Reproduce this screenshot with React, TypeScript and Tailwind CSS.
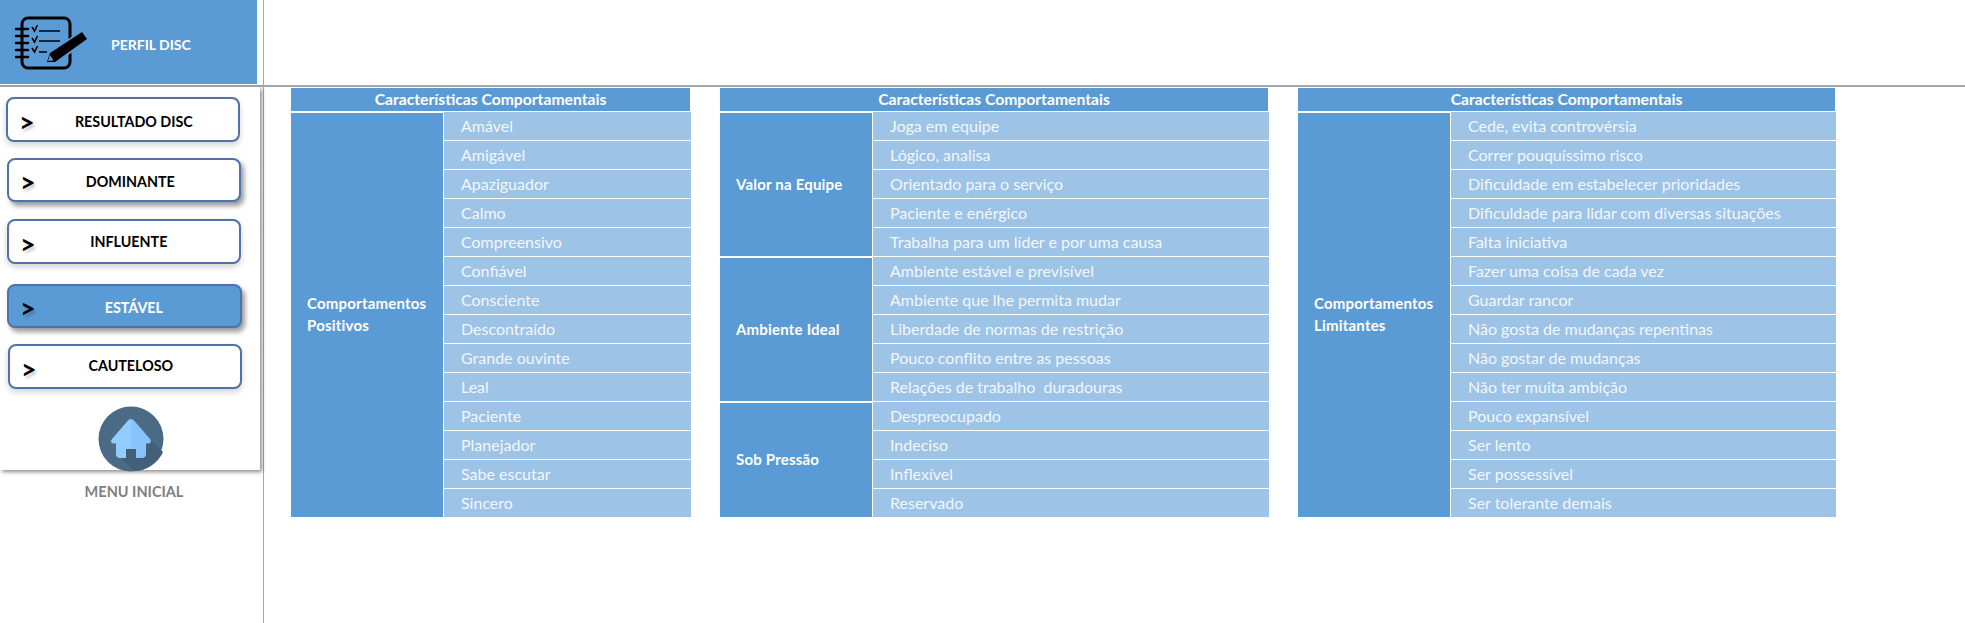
const font = "font-['Lato','Open_Sans',sans-serif]";

const menu = [
  { label: "RESULTADO DISC", box: "ml-[6px] mt-[10px] h-[45px] w-[234px] shadow-[0_3px_6px_rgba(0,0,0,0.18)]", text: "pr-[5px] pt-[2px]" },
  { label: "DOMINANTE", box: "ml-[7px] mt-[16px] h-[44px] w-[234px] shadow-[3px_4px_5px_rgba(0,0,0,0.4)]", text: "pr-[14px]" },
  { label: "INFLUENTE", box: "ml-[7px] mt-[17px] h-[45px] w-[234px] shadow-[0_3px_6px_rgba(0,0,0,0.18)]", text: "pr-[17px] pb-[2px]" },
  { label: "ESTÁVEL", box: "ml-[7px] mt-[20px] h-[44px] w-[235px] shadow-[3px_4px_5px_rgba(0,0,0,0.4)]", text: "pr-[8px]", active: true },
  { label: "CAUTELOSO", box: "ml-[8px] mt-[16px] h-[45px] w-[234px] shadow-[0_3px_6px_rgba(0,0,0,0.18)]", text: "pr-[15px] pb-[5px]" },
];

const tables = [
  {
    width: "w-[400px]",
    ml: "ml-[27px]",
    groups: [
      {
        title: "Comportamentos Positivos",
        items: ["Amável", "Amigável", "Apaziguador", "Calmo", "Compreensivo", "Confiável", "Consciente", "Descontraído", "Grande ouvinte", "Leal", "Paciente", "Planejador", "Sabe escutar", "Sincero"],
      },
    ],
  },
  {
    width: "w-[549px]",
    ml: "ml-[29px]",
    groups: [
      { title: "Valor na Equipe", items: ["Joga em equipe", "Lógico, analisa", "Orientado para o serviço", "Paciente e enérgico", "Trabalha para um líder e por uma causa"] },
      { title: "Ambiente Ideal", items: ["Ambiente estável e previsível", "Ambiente que lhe permita mudar", "Liberdade de normas de restrição", "Pouco conflito entre as pessoas", "Relações de trabalho  duradouras"] },
      { title: "Sob Pressão", items: ["Despreocupado", "Indeciso", "Inflexível", "Reservado"] },
    ],
  },
  {
    width: "w-[538px]",
    ml: "ml-[29px]",
    groups: [
      {
        title: "Comportamentos Limitantes",
        items: ["Cede, evita controvérsia", "Correr pouquíssimo risco", "Dificuldade em estabelecer prioridades", "Dificuldade para lidar com diversas situações", "Falta iniciativa", "Fazer uma coisa de cada vez", "Guardar rancor", "Não gosta de mudanças repentinas", "Não gostar de mudanças", "Não ter muita ambição", "Pouco expansível", "Ser lento", "Ser possessível", "Ser tolerante demais"],
      },
    ],
  },
];

function NotebookIcon() {
  return (
    <svg width="90" height="84" viewBox="0 0 90 84" className="shrink-0">
      <rect x="22" y="18" width="48" height="50" rx="6" fill="none" stroke="#000" strokeWidth="3" />
      {[29, 36, 43, 50, 57].map((y) => (
        <path key={y} d={`M16 ${y}h12`} stroke="#000" strokeWidth="2.5" strokeLinecap="round" />
      ))}
      <g fill="none" stroke="#000" strokeWidth="1.6">
        <path d="M32 27l2.500 4 3-6" />
        <path d="M32 38l2.500 4 3-6" />
        <path d="M32 48l2.500 4 3-6" />
        <path d="M39 31h21M39 41h21M39 52h8" />
      </g>
      <path d="M49 51L81 31L89 40L56 64L44 65Z" fill="#5b9bd5" />
      <path d="M50 53L82 32L87 39L55 62L47 62Z" fill="#000" />
      <path d="M50 55L53.500 60.500L48 61Z" fill="#5b9bd5" />
    </svg>
  );
}

function HomeBadge() {
  return (
    <svg width="66" height="66" viewBox="0 0 66 66" className="relative">
      <circle cx="33" cy="33" r="32.500" fill="#4a6a85" />
      <path d="M48 29L65 46A32.500 32.500 0 0 1 36 65L18 47Z" fill="#426078" />
      <path d="M33 13C31.500 13 30.500 14 29.500 15L14 33C12 35.500 13.500 37.500 16 37.500H18V48C18 50.500 19.500 52 22 52H28V43H33Z" fill="#93cdff" />
      <path d="M33 13C34.500 13 35.500 14 36.500 15L52 33C54 35.500 52.500 37.500 50 37.500H48V48C48 50.500 46.500 52 44 52H38V43H33Z" fill="#88c4f9" />
    </svg>
  );
}

function Table({ table }: { table: (typeof tables)[number] }) {
  return (
    <div className={`${table.width} ${table.ml} shrink-0`}>
      <div className="mr-[1px] flex h-[23px] items-center justify-center bg-[#5b9bd5] text-[15.700px] font-bold text-white">
        Características Comportamentais
      </div>
      <div className="mt-[1px]">
        {table.groups.map((group) => (
          <div key={group.title} className="flex">
            <div className="mt-[1px] mb-[1px] flex w-[152px] shrink-0 items-center bg-[#5b9bd5] pb-[2px] pl-[16px] pr-[8px] text-[15px] leading-[22px] font-bold text-white">
              <span className="tracking-[0.2px]">{group.title}</span>
            </div>
            <div className="ml-[1px] min-w-0 flex-1">
              {group.items.map((item) => (
                <div key={item} className="flex h-[29px] items-center whitespace-pre border-b border-white bg-[#9dc3e6] pl-[17px] text-[16px] text-[#f2f7fc]">
                  {item}
                </div>
              ))}
            </div>
          </div>
        ))}
      </div>
    </div>
  );
}

export default function App() {
  return (
    <div className={`${font} h-[623px] w-[1965px] overflow-hidden bg-white`}>
      {/* Header */}
      <div className="flex h-[87px] border-b-2 border-[#a6a6a6]">
        <div className="flex h-[84px] w-[257px] items-center bg-[#5b9bd5]">
          <NotebookIcon />
          <span className="ml-[21px] pt-[5px] text-[14px] font-bold text-white">PERFIL DISC</span>
        </div>
        <div className="ml-[6px] w-[1px] bg-[#a6a6a6]" />
      </div>

      <div className="flex">
        {/* Sidebar */}
        <div className="h-[536px] w-[264px] shrink-0 border-r border-[#a6a6a6]">
          <div className="relative h-[383px] w-[260px] bg-white shadow-[2px_2px_4px_rgba(0,0,0,0.45)]">
            <div className="flex flex-col">
              {menu.map((item) => (
                <div
                  key={item.label}
                  className={`${item.box} flex items-center rounded-[8px] border-2 border-[#4f72a8] pt-[3px] pl-[11px] ${item.active ? "bg-[#5b9bd5] text-white" : "bg-white text-black"}`}
                >
                  <span className="text-[27px] leading-none font-bold text-black [text-shadow:2px_3px_3px_rgba(0,0,0,0.2)]">&gt;</span>
                  <span className={`flex-1 text-center text-[14.300px] font-bold ${item.text}`}>{item.label}</span>
                </div>
              ))}
            </div>
            <div className="mt-[17px] flex justify-center pl-[2px]">
              <HomeBadge />
            </div>
          </div>
          <div className="mt-[11px] w-[268px] text-center text-[14.500px] font-bold text-[#7f7f7f]">MENU INICIAL</div>
        </div>

        {/* Tabelas */}
        <div className="flex items-start pt-[1px]">
          {tables.map((table) => (
            <Table key={table.width} table={table} />
          ))}
        </div>
      </div>
    </div>
  );
}
